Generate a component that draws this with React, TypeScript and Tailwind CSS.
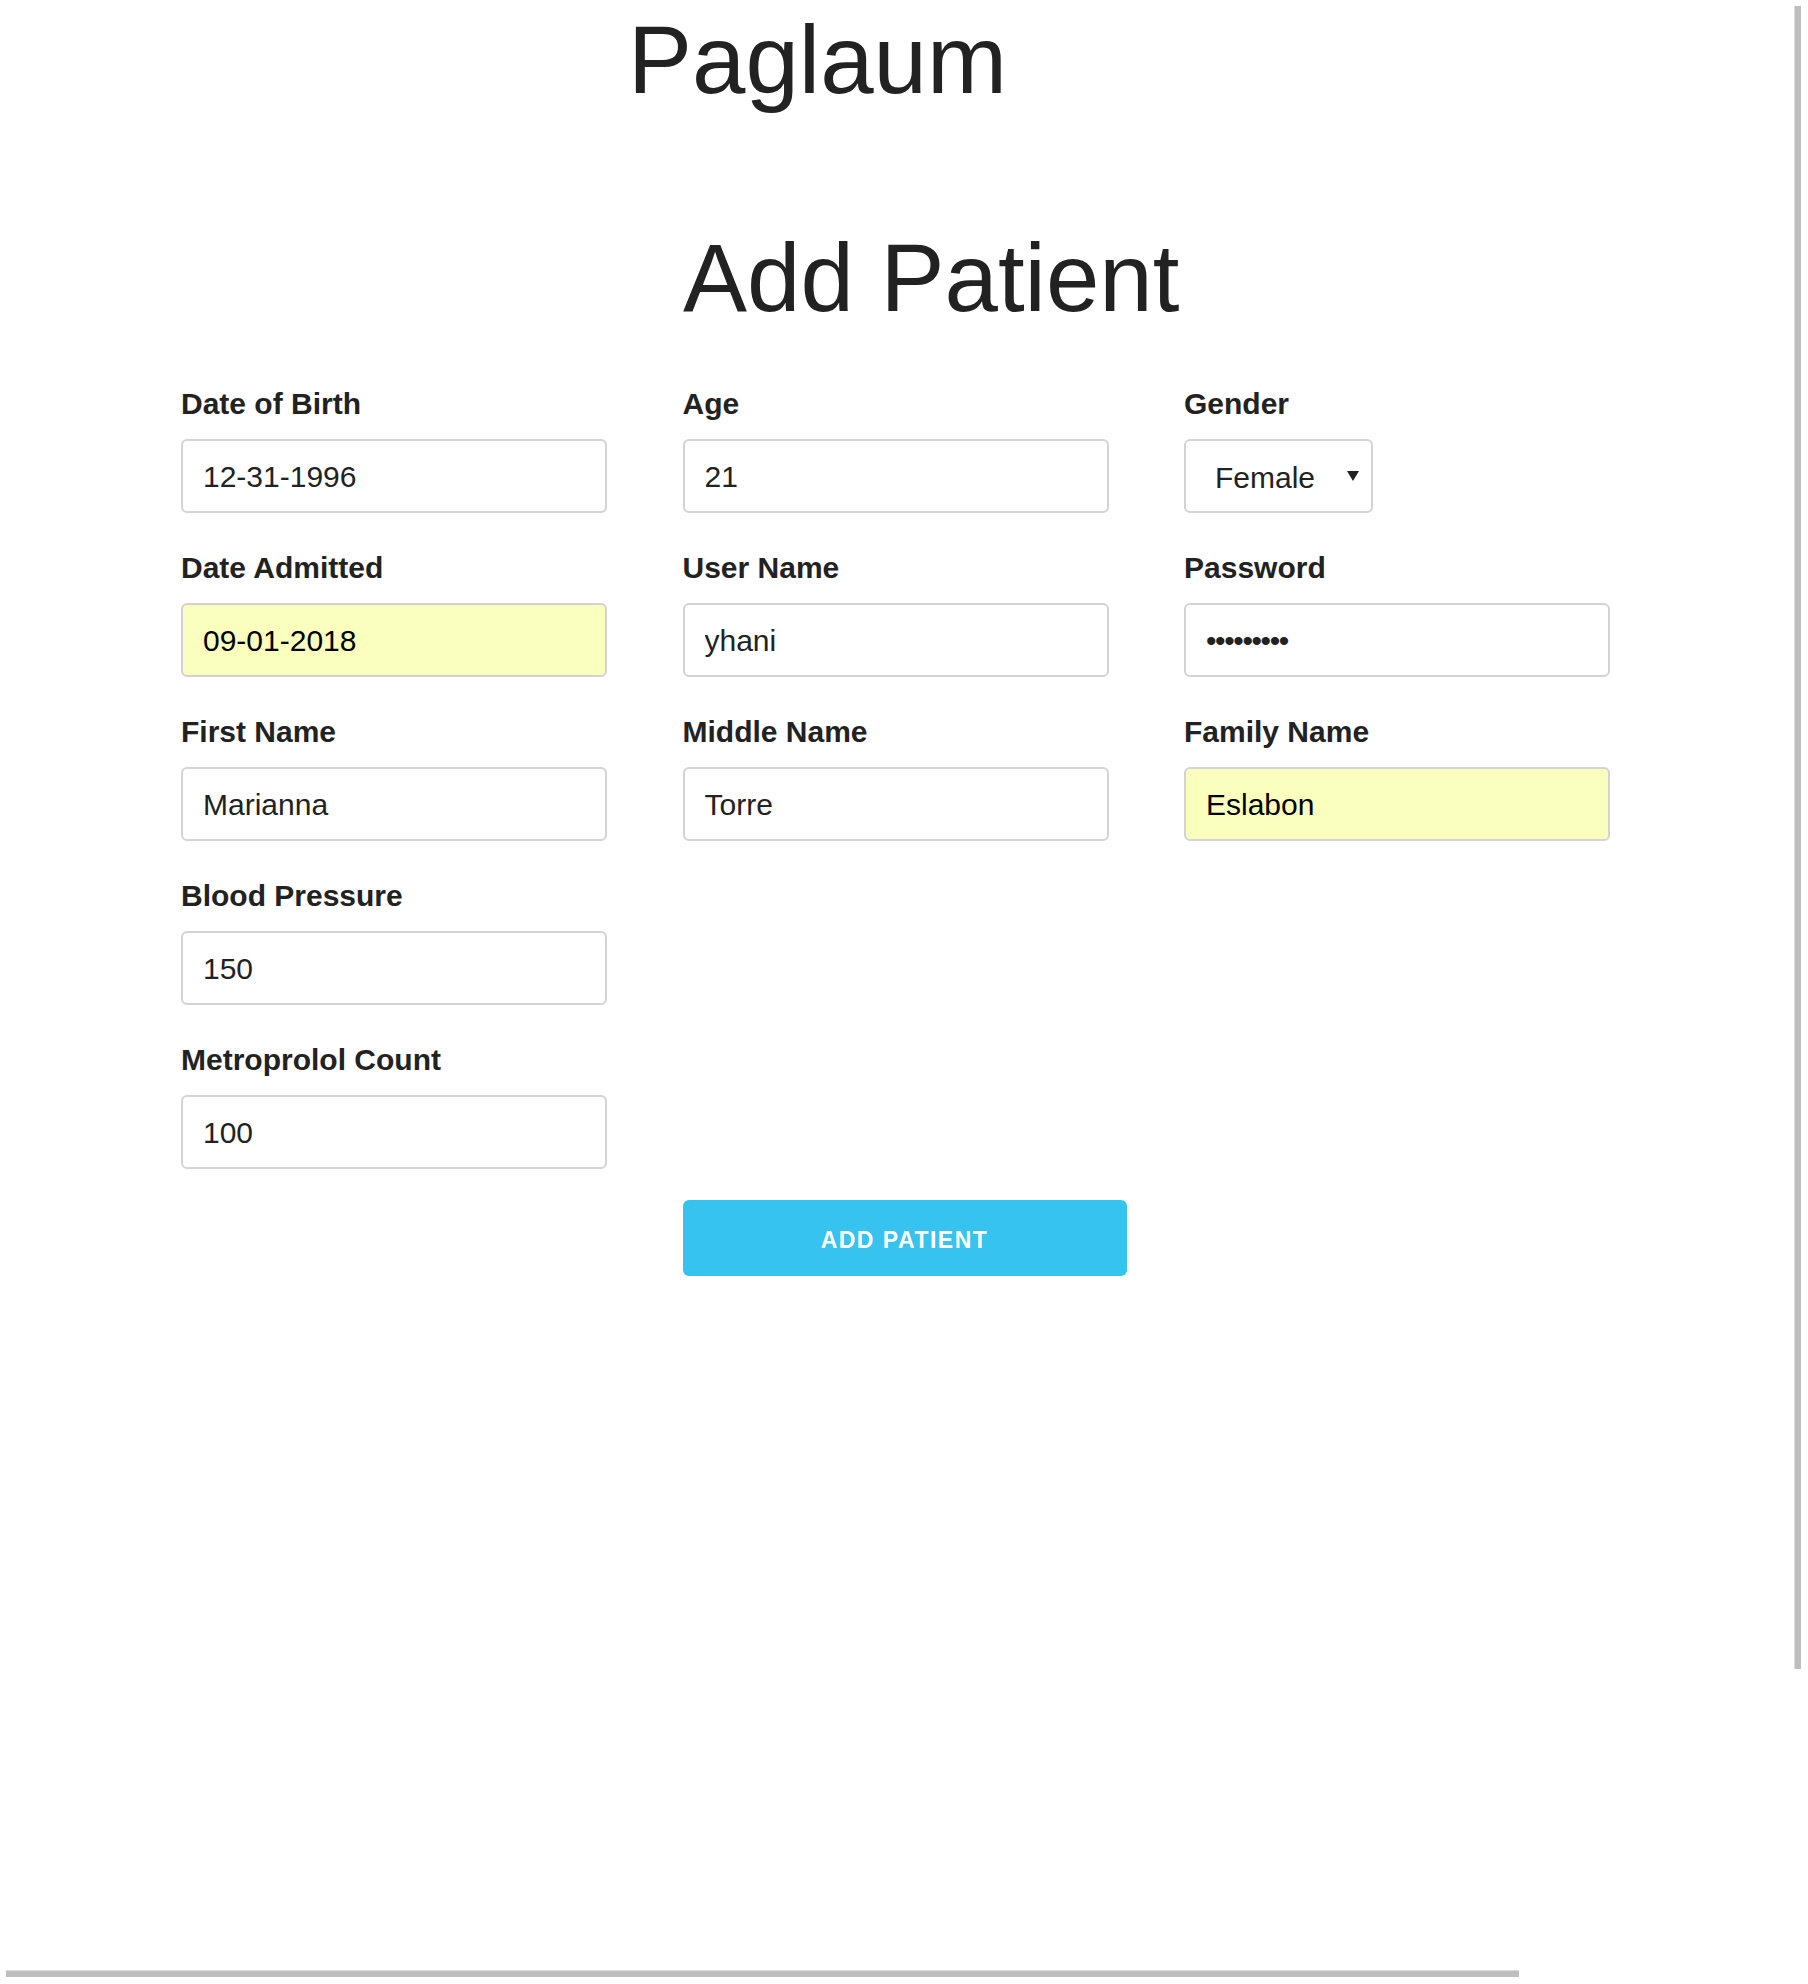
import React from "react";

type Field = {
  label: string;
  value: string;
  autofill?: boolean;
  type?: "text" | "password" | "select";
};

const rows: (Field | null)[][] = [
  [
    { label: "Date of Birth", value: "12-31-1996" },
    { label: "Age", value: "21" },
    { label: "Gender", value: "Female", type: "select" },
  ],
  [
    { label: "Date Admitted", value: "09-01-2018", autofill: true },
    { label: "User Name", value: "yhani" },
    { label: "Password", value: "123456789", type: "password" },
  ],
  [
    { label: "First Name", value: "Marianna" },
    { label: "Middle Name", value: "Torre" },
    { label: "Family Name", value: "Eslabon", autofill: true },
  ],
  [{ label: "Blood Pressure", value: "150" }, null, null],
  [{ label: "Metroprolol Count", value: "100" }, null, null],
];

function FieldBlock({ f }: { f: Field }) {
  return (
    <div className="flex flex-col">
      <label className="block text-[30px] leading-[34px] font-bold text-[#222] mb-[18px]">
        {f.label}
      </label>
      {f.type === "select" ? (
        <div className="relative w-[189px] h-[74px]">
          <select
            defaultValue={f.value}
            className="appearance-none w-full h-full border-2 border-[#d3d3d3] rounded-[6px] bg-white pl-[29px] pr-[30px] pt-[2px] text-[30px] text-[#222] outline-none"
          >
            <option>Male</option>
            <option>Female</option>
          </select>
          <svg
            className="absolute right-[14px] top-[32px] pointer-events-none"
            width="12"
            height="10"
            viewBox="0 0 12 10"
          >
            <path d="M0 0 L12 0 L6 10 Z" fill="#222" />
          </svg>
        </div>
      ) : (
        <input
          type={f.type === "password" ? "password" : "text"}
          defaultValue={f.value}
          readOnly
          className={
            "w-full h-[74px] border-2 border-[#d3d3d3] rounded-[6px] pl-[20px] pr-[19px] pt-[2px] text-[30px] outline-none " +
            (f.autofill ? "bg-[#faffbd] text-black " : "bg-white text-[#222] ") +
            (f.type === "password" ? "tracking-[-1.4px]" : "")
          }
        />
      )}
    </div>
  );
}

export default function App() {
  return (
    <div className="relative w-[1808px] h-[1984px] overflow-hidden bg-white font-['Liberation_Sans',Arial,sans-serif] text-[#222]">
      <h1 className="pl-[628px] pt-[12px] text-[96px] leading-[96px] font-normal">
        Paglaum
      </h1>
      <h2 className="pl-[683px] mt-[122px] text-[96px] leading-[96px] font-normal">
        Add Patient
      </h2>

      <form className="mt-[61px] pl-[181px]">
        <div className="grid grid-cols-[426px_426px_426px] gap-x-[75.5px] gap-y-[38px]">
          {rows.flat().map((f, i) =>
            f ? <FieldBlock key={i} f={f} /> : <div key={i} />
          )}
        </div>
        <div className="ml-[501.5px] mt-[31px]">
          <button
            type="button"
            className="w-[444px] h-[76px] rounded-[6px] bg-[#37c3ef] text-white font-bold uppercase text-[23px] tracking-[1.5px] pt-[4px]"
          >
            Add Patient
          </button>
        </div>
      </form>

      {/* overlay scrollbar thumbs */}
      <div className="absolute left-[1794px] top-[6px] w-[7px] h-[1663px] bg-[#bebebe] border-l border-[#dcdcdc]" />
      <div className="absolute left-[6px] top-[1970px] w-[1513px] h-[7px] bg-[#bebebe] border-t border-[#dcdcdc]" />
    </div>
  );
}
